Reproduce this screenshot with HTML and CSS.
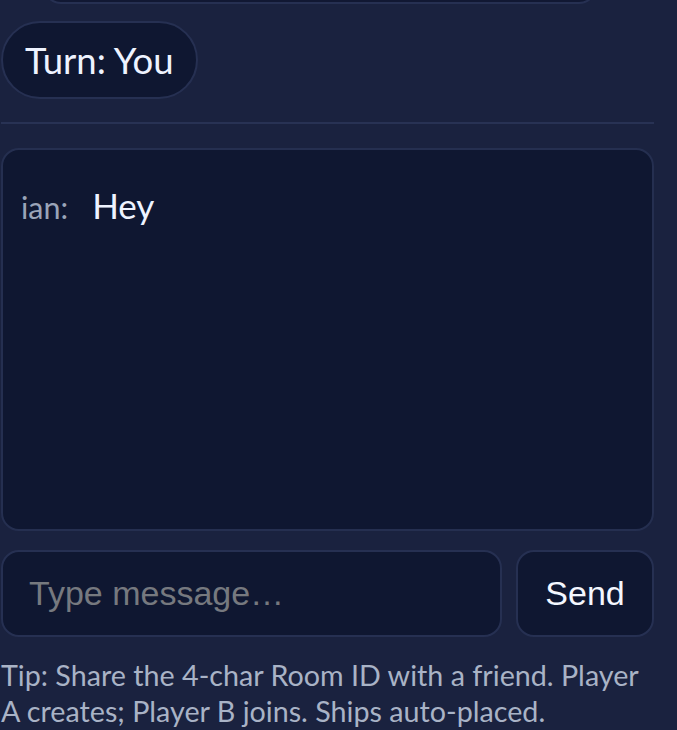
FILE: index.html
```html
<!DOCTYPE html>
<html lang="en">
<head>
<meta charset="utf-8">
<title>Chat</title>
<link rel="stylesheet" href="styles.css">
</head>
<body>
<div class="page">
  <div class="top-card"></div>
  <div class="status-row">
    <span class="pill">Turn: You</span>
  </div>
  <hr class="divider">
  <div class="chat-log">
    <div class="msg"><span class="who">ian:</span><span class="text">Hey</span></div>
  </div>
  <form class="composer">
    <input class="msg-input" type="text" placeholder="Type message…">
    <button class="send-btn" type="button">Send</button>
  </form>
  <p class="tip">Tip: Share the 4-char Room ID with a friend. Player A creates; Player B joins. Ships auto-placed.</p>
</div>
</body>
</html>
```
FILE: styles.css
```css
html, body {
  margin: 0;
  padding: 0;
  background: #1a223f;
  height: 100%;
  overflow: hidden;
}
.page {
  width: 653px;
  padding: 0 0 0 1px;
  font-family: Lato, "Noto Sans", sans-serif;
  color: #e8eefc;
}
.top-card {
  margin: -40px 57px 0 42px;
  height: 40px;
  background: #111833;
  border: 2px solid #263052;
  border-radius: 18px;
}
.status-row {
  margin-top: 17px;
  display: flex;
}
.pill {
  display: inline-flex;
  align-items: center;
  height: 74px;
  padding: 0 22px;
  background: #0f1731;
  border: 2px solid #263052;
  border-radius: 40px;
  font-size: 36.5px;
  color: #eef3ff;
}
.divider {
  margin: 23px 0 0 0;
  border: 0;
  height: 2px;
  background: #283254;
}
.chat-log {
  margin-top: 24px;
  height: 383px;
  box-sizing: border-box;
  padding: 34px 18px;
  background: #0f1731;
  border: 2px solid #252f50;
  border-radius: 18px;
}
.msg {
  display: flex;
  align-items: baseline;
  gap: 24px;
}
.who {
  font-size: 30.5px;
  color: #9aa4b8;
}
.text {
  font-size: 35px;
  color: #eef3ff;
}
.composer {
  margin: 19px 0 0 0;
  display: flex;
  gap: 14px;
}
.msg-input {
  flex: 1;
  height: 87px;
  box-sizing: border-box;
  padding: 0 26px;
  background: #0f1731;
  border: 2px solid #263052;
  border-radius: 18px;
  font-family: "Liberation Sans", Arial, sans-serif;
  font-size: 34px;
  color: #eef3ff;
  outline: none;
}
.msg-input::placeholder {
  color: #76797f;
}
.send-btn {
  width: 138px;
  height: 87px;
  background: #0f1731;
  border: 2px solid #263052;
  border-radius: 18px;
  font-family: "Liberation Sans", Arial, sans-serif;
  font-size: 34px;
  color: #f4f7ff;
  padding: 0;
}
.tip {
  margin: 20px 0 0 0;
  font-size: 28.7px;
  line-height: 36px;
  color: #a9b3c6;
}
```
